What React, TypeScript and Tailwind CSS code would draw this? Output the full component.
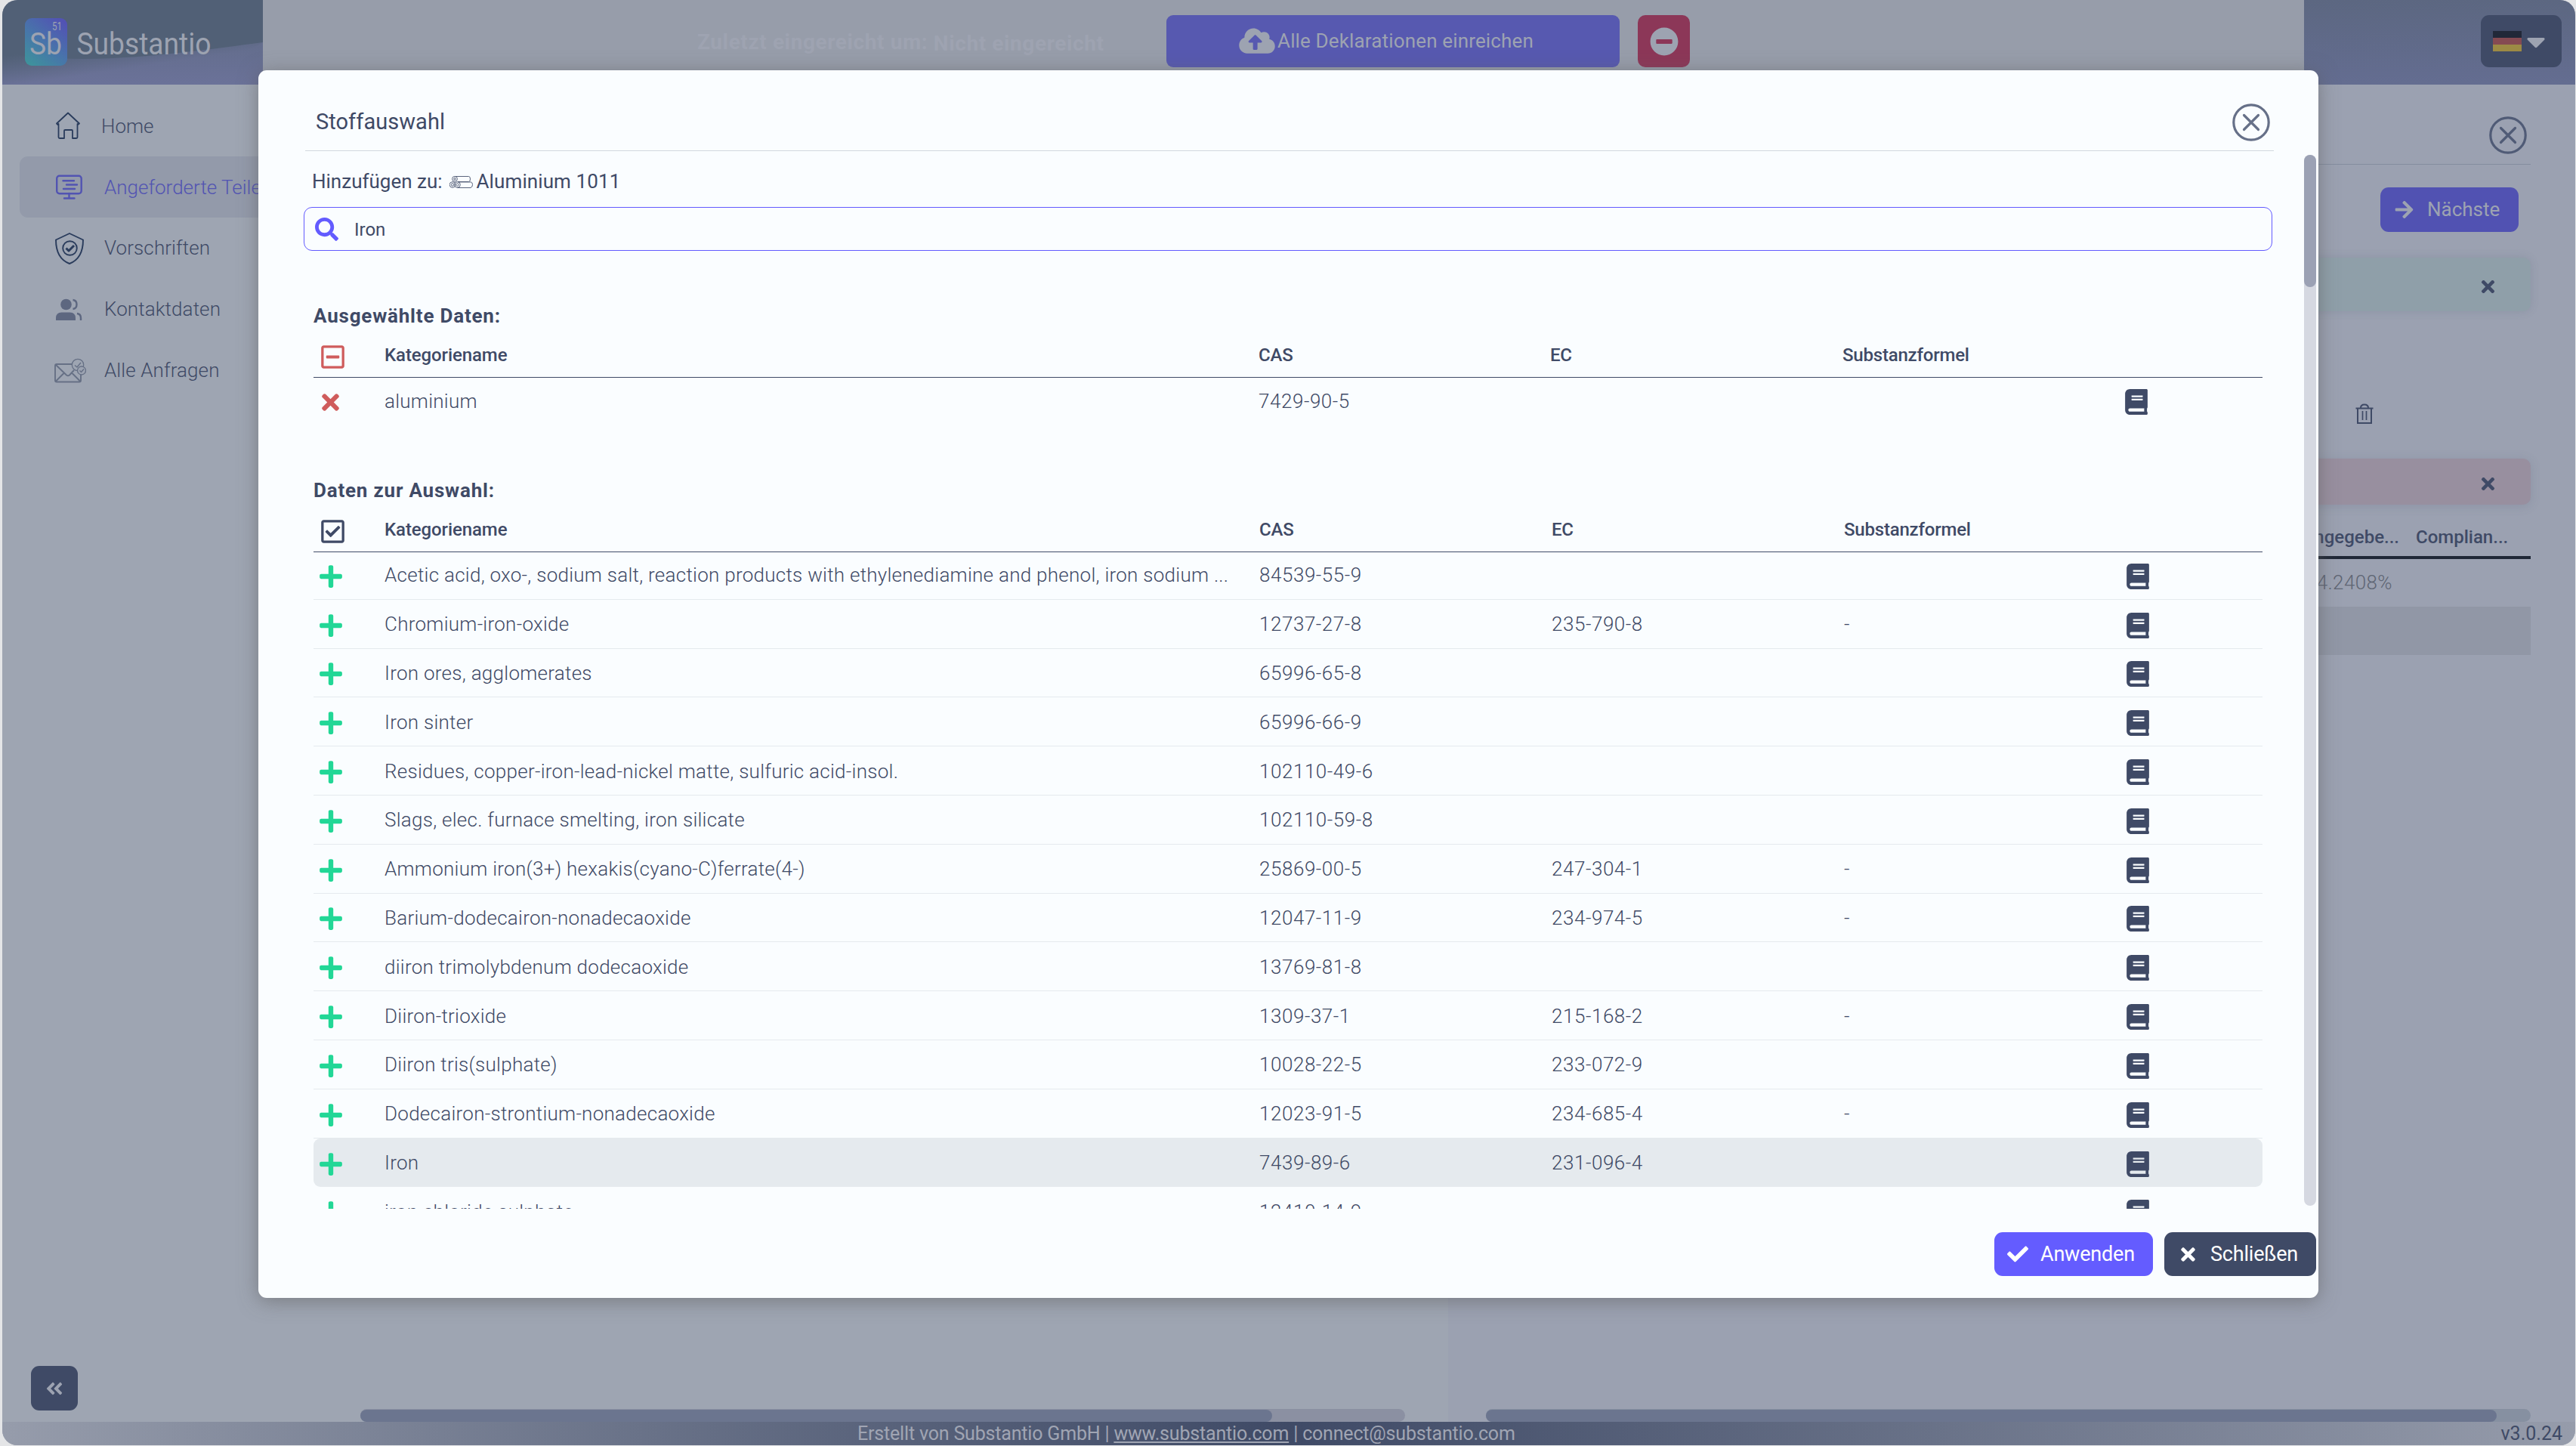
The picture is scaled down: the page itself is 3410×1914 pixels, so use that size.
import { FaAngleDoubleLeft, FaArrowRight, FaBook, FaCaretDown, FaCheck, FaCloudUploadAlt, FaMinusCircle, FaPlus, FaRegCheckSquare, FaRegMinusSquare, FaSearch, FaTimes } from "react-icons/fa";

type Substance = { name: string; cas: string; ec?: string; formula?: string; active?: boolean };

const substances: Substance[] = [
  { name: "Acetic acid, oxo-, sodium salt, reaction products with ethylenediamine and phenol, iron sodium ...", cas: "84539-55-9" },
  { name: "Chromium-iron-oxide", cas: "12737-27-8", ec: "235-790-8", formula: "-" },
  { name: "Iron ores, agglomerates", cas: "65996-65-8" },
  { name: "Iron sinter", cas: "65996-66-9" },
  { name: "Residues, copper-iron-lead-nickel matte, sulfuric acid-insol.", cas: "102110-49-6" },
  { name: "Slags, elec. furnace smelting, iron silicate", cas: "102110-59-8" },
  { name: "Ammonium iron(3+) hexakis(cyano-C)ferrate(4-)", cas: "25869-00-5", ec: "247-304-1", formula: "-" },
  { name: "Barium-dodecairon-nonadecaoxide", cas: "12047-11-9", ec: "234-974-5", formula: "-" },
  { name: "diiron trimolybdenum dodecaoxide", cas: "13769-81-8" },
  { name: "Diiron-trioxide", cas: "1309-37-1", ec: "215-168-2", formula: "-" },
  { name: "Diiron tris(sulphate)", cas: "10028-22-5", ec: "233-072-9" },
  { name: "Dodecairon-strontium-nonadecaoxide", cas: "12023-91-5", ec: "234-685-4", formula: "-" },
  { name: "Iron", cas: "7439-89-6", ec: "231-096-4", active: true },
  { name: "iron chloride sulphate", cas: "12410-14-9" },
];

function Logo() {
  return (
    <svg className="block h-[112px] w-[345px]" viewBox="3 0 345 112" fill="none">
      <defs>
        <linearGradient id="wave" x1="0" y1="55" x2="0" y2="112" gradientUnits="userSpaceOnUse">
          <stop stopColor="#636d8c" />
          <stop offset="1" stopColor="#6b7299" />
        </linearGradient>
        <linearGradient id="waveFade" x1="60" y1="66" x2="66" y2="106" gradientUnits="userSpaceOnUse">
          <stop stopColor="#516076" />
          <stop offset="1" stopColor="#516076" stopOpacity="0" />
        </linearGradient>
        <linearGradient id="tile" x1="36" y1="87" x2="84" y2="28" gradientUnits="userSpaceOnUse">
          <stop stopColor="#3d949b" />
          <stop offset="0.5" stopColor="#4874aa" />
          <stop offset="1" stopColor="#5252b4" />
        </linearGradient>
      </defs>
      <rect x="3" width="345" height="112" fill="#516076" />
      <path d="M3 70C110 86 200 76 348 56V112H3Z" fill="url(#wave)" />
      <path d="M3 60C110 78 200 76 348 56C300 85 180 112 3 112Z" fill="url(#waveFade)" />
      <rect x="33" y="24" width="56" height="63" rx="9" fill="url(#tile)" />
      <g fill="#9da3b1" fontFamily="Roboto, sans-serif">
        <text x="69" y="40" fontSize="14" textLength="13" lengthAdjust="spacingAndGlyphs">51</text>
        <text x="39" y="72" fontSize="41" textLength="43" lengthAdjust="spacingAndGlyphs">Sb</text>
        <text x="101.500" y="72" fontSize="41" textLength="178" lengthAdjust="spacingAndGlyphs">Substantio</text>
      </g>
    </svg>
  );
}

function HomeIcon() {
  return (
    <svg className="w-[36px] h-[44px]" viewBox="72 143 36 44" fill="none" stroke="#2a3c5c" strokeWidth="1.800" strokeLinejoin="round">
      <path d="M75 161.500 90 147.500 105 161.500 103 163 102.500 162V179.500Q102.500 181 101 181H96V171Q96 170 95 170H86Q85 170 85 171V181H79Q77.500 181 77.500 179.500V162L76.500 163Z" />
    </svg>
  );
}

function BoardIcon() {
  return (
    <svg className="w-[36px] h-[34px]" viewBox="0 0 36 34" fill="none" stroke="#5254b2" strokeWidth="2.400" strokeLinecap="round">
      <rect x="1.200" y="1.700" width="32.500" height="23.500" rx="3.500" />
      <path d="M9.500 8.200H24M14 13.500H28M10 19H25M17.500 25V31M11 31.500H24.500" />
    </svg>
  );
}

function ShieldIcon() {
  return (
    <svg className="w-[40px] h-[44px]" viewBox="0 0 40 44" fill="none" stroke="#2a3c5c" strokeWidth="1.900" strokeLinejoin="round">
      <path d="M20 2 38 10.500C38 26 33 37 20 42C7 37 2 26 2 10.500Z" />
      <circle cx="20.500" cy="21.500" r="9.300" />
      <path d="M15.500 21.500 19 25 26 18" strokeWidth="3" />
    </svg>
  );
}

function UsersIcon() {
  return (
    <svg className="w-[36px] h-[32px]" viewBox="0 0 36 32" fill="none">
      <circle cx="13.500" cy="9" r="7.300" fill="#5d6780" />
      <path d="M0 30V27Q0 19.500 7.500 19.500H18.500Q26 19.500 26 27V30Z" fill="#5d6780" />
      <path d="M22.500 3Q27.500 3.500 27.500 9T22.500 15M28 21Q33 21.500 33 27V30" stroke="#5d6780" strokeWidth="2.400" />
    </svg>
  );
}

function MailIcon() {
  return (
    <svg className="w-[42px] h-[34px]" viewBox="0 0 42 34" fill="none" stroke="#667085" strokeWidth="1.900" strokeLinejoin="round">
      <path d="M24 8H3Q1 8 1 10V29.500Q1 31.500 3 31.500H33Q35 31.500 35 29.500V22M2 9 16 22.500Q18 24 20 22.500L26 16M2 30.500 13 19.500M34 30.500 23 19.500" />
      <circle cx="31" cy="9" r="7.700" strokeWidth="1.300" />
      <circle cx="36" cy="16.500" r="5.500" fill="#9ca3b1" strokeWidth="1.300" />
      <path d="M27 9.500 30 12 35 6M33.500 16.500 35.500 18.500 39 14.500" strokeWidth="1.400" />
    </svg>
  );
}

function RodsIcon() {
  return (
    <svg className="w-[32px] h-[18px]" viewBox="0 0 32 18" fill="none" stroke="#5a647c" strokeWidth="1">
      <path d="M7 1.500H25.500Q27.500 1.500 27.500 5T25.500 8.500H11M11 9H28.500Q30.500 9.500 30.500 12.500T28 16.500H10" />
      <circle cx="7" cy="4.800" r="3.400" />
      <circle cx="7" cy="4.800" r="1.300" />
      <circle cx="4" cy="12.500" r="3.800" />
      <circle cx="4" cy="12.500" r="1.700" />
      <circle cx="10.500" cy="12.500" r="3.800" />
      <circle cx="10.500" cy="12.500" r="1.700" />
    </svg>
  );
}

function TrashIcon() {
  return (
    <svg className="w-[24px] h-[28px]" viewBox="0 0 24 28" fill="none" stroke="#3f4a66" strokeWidth="2">
      <path d="M0.500 6.500H23.500M3 6.500V26H21V6.500M7 6Q7 1.500 12 1.500T17 6" />
      <path d="M9.500 10V22M14.500 10V22" strokeWidth="1.700" />
    </svg>
  );
}

function CloseCircle({ color }: { color: string }) {
  return (
    <svg className="size-[50px]" viewBox="0 0 50 50" fill="none" stroke={color} strokeWidth="3.200" strokeLinecap="round">
      <circle cx="25" cy="25" r="23.200" />
      <path d="M15.500 15.500 34.500 34.500M34.500 15.500 15.500 34.500" />
    </svg>
  );
}

const nav = [
  { label: "Home", icon: <HomeIcon />, box: "pl-[69px] pt-px", text: "pl-[26px] text-[#3f4a66]" },
  { label: "Angeforderte Teile", icon: <BoardIcon />, box: "ml-[23px] pl-[48px] pt-px rounded-l-[11px] bg-[#939aaa]", text: "pl-[28px] text-[#5254b2]" },
  { label: "Vorschriften", icon: <ShieldIcon />, box: "pl-[69px]", text: "pl-[26px] tracking-[0.1px] text-[#3f4a66]" },
  { label: "Kontaktdaten", icon: <UsersIcon />, box: "pl-[71px]", text: "pl-[28px] tracking-[0.1px] text-[#3f4a66]" },
  { label: "Alle Anfragen", icon: <MailIcon />, box: "pl-[69px]", text: "pl-[24px] tracking-[0.1px] text-[#3f4a66]" },
];

function Sidebar() {
  return (
    <div className="w-[345px] shrink-0 flex flex-col pt-[14px]">
      {nav.map((item) => (
        <div key={item.label} className={`h-[81px] flex items-center overflow-hidden whitespace-nowrap ${item.box}`}>
          <span className="shrink-0">{item.icon}</span>
          <span className={`font-light text-[26px] ${item.text}`}>{item.label}</span>
        </div>
      ))}
      <button className="mt-auto mb-[15px] ml-[38px] w-[62px] h-[59px] rounded-[11px] bg-[#3f4a66] text-[#9da3b1] flex items-center justify-center">
        <FaAngleDoubleLeft className="size-[26px]" />
      </button>
    </div>
  );
}

function TopBar() {
  return (
    <div className="h-[112px] shrink-0 flex">
      <Logo />
      <div className="flex-1 bg-[#979daa] flex pt-[20px] pl-[575px]">
        <p className="w-[621px] pt-[18px] font-bold text-[28px] leading-[36px] tracking-[0.6px] text-[#9ea3b1] whitespace-nowrap">
          Zuletzt eingereicht um: <span className="relative top-[2px]">Nicht eingereicht</span>
        </p>
        <button className="w-[600px] h-[69px] rounded-[9px] bg-[#5759b0] text-[#9da3b1] text-[26px] tracking-[0.15px] flex items-center justify-center gap-[3px] pb-[1px] pr-[18px]">
          <FaCloudUploadAlt className="w-[48px] h-[38px]" />
          Alle Deklarationen einreichen
        </button>
        <button className="ml-[24px] w-[69px] h-[69px] rounded-[10px] bg-[#8c3758] text-[#9da3b1] flex items-center justify-center">
          <FaMinusCircle className="size-[38px]" />
        </button>
      </div>
      <div className="w-[359px] bg-gradient-to-t from-[#646d91] to-[#5c6781] flex justify-end pt-[20px] pr-[18px]">
        <div className="w-[107px] h-[69px] rounded-[11px] bg-[#3f4a66] flex items-center pl-[16px] gap-px">
          <div className="w-[38px] h-[27px] flex flex-col">
            <div className="flex-1 bg-[#212838]" />
            <div className="flex-1 bg-[#854a52]" />
            <div className="flex-1 bg-[#9c8a45]" />
          </div>
          <FaCaretDown className="w-[36px] h-[40px] text-[#9da3b1]" />
        </div>
      </div>
    </div>
  );
}

function RightPanel() {
  return (
    <div className="w-[1492px] shrink-0 flex flex-col pl-[50px] pr-[59px] bg-[#9ba1b1] text-[#3f4a66]">
      <div className="h-[106px] border-b border-[#848d9f] pt-[29px] pr-[5px] flex items-center justify-end">
        <CloseCircle color="#505b76" />
      </div>
      <button className="mt-[30px] mr-[16px] self-end w-[183px] h-[59px] rounded-[11px] bg-[#5152b2] text-[#9da3b1] text-[26px] flex items-center pl-[18px] gap-[17px]">
        <FaArrowRight className="size-[27px]" />
        Nächste
      </button>
      <div className="mt-[34px] h-[71px] rounded-[10px] bg-[#8f9fa9] shadow-[0_0_12px_rgba(80,90,110,0.18)] flex items-center justify-end pr-[44px] pt-[5px]">
        <FaTimes className="size-[25px]" />
      </div>
      <div className="mt-[122px] pr-[208px] h-[28px] flex justify-end">
        <TrashIcon />
      </div>
      <div className="mt-[45px] h-[61px] rounded-[10px] bg-[#988f9f] shadow-[0_2px_14px_rgba(80,90,110,0.18)] flex items-center justify-end pr-[44px] pt-[5px]">
        <FaTimes className="size-[25px]" />
      </div>
      <div className="h-[72px] border-b-4 border-[#1f2736] pt-[18px] flex items-center justify-end text-[24px] font-medium">
        <span>Angegebe...</span>
        <span className="w-[174px] pl-[22px]">Complian...</span>
      </div>
      <div className="h-[63px] pr-[183px] flex items-center justify-end text-[26px] font-light tracking-[0.4px] text-[#5f6674]">54.2408%</div>
      <div className="h-[64px] bg-[#9197a6]" />
      <div className="mt-auto h-[17px] rounded-full bg-[#8690a1] pt-px">
        <div className="w-[1338px] h-[16px] rounded-full bg-[#6b758f]" />
      </div>
    </div>
  );
}

function SubstanceRow({ item, cols, icon }: { item: Substance; cols: string; icon: React.ReactNode }) {
  return (
    <div className={`grid items-center font-light text-[26px] tracking-[0.55px] whitespace-nowrap ${cols}`}>
      {icon}
      <span className="pl-px tracking-[0.27px]">{item.name}</span>
      <span>{item.cas}</span>
      <span>{item.ec}</span>
      <span>{item.formula}</span>
      <FaBook className="w-[30px] h-[34px] ml-px mt-[2px]" />
    </div>
  );
}

function TableHeader({ cols, icon }: { cols: string; icon: React.ReactNode }) {
  return (
    <div className={`h-[66px] pt-[6px] border-b border-[#3f4a66] grid items-center font-medium text-[24px] tracking-[-0.2px] ${cols}`}>
      {icon}
      <span className="pl-px tracking-[-0.1px]">Kategoriename</span>
      <span>CAS</span>
      <span>EC</span>
      <span>Substanzformel</span>
    </div>
  );
}

const selectedCols = "grid-cols-[93px_1158px_386px_387px_1fr]";
const choiceCols = "grid-cols-[93px_1159px_387px_387px_1fr]";

function SubstanceDialog() {
  return (
    <div className="absolute left-[342px] top-[93px] w-[2727px] h-[1625px] rounded-[11px] bg-[#fafdff] text-[#3f4a66] shadow-[0_4px_26px_rgba(90,90,90,0.55)] flex flex-col">
      <div className="ml-[62px] mr-[59px] h-[107px] shrink-0 border-b border-[#d2d8de] pt-[31px] pl-[14px] pr-[5px] flex items-center justify-between">
        <h2 className="pt-px text-[29px] tracking-[0.05px]">Stoffauswahl</h2>
        <CloseCircle color="#667088" />
      </div>
      <div className="h-[1400px] flex overflow-hidden">
        <div className="flex-1 pl-[60px] pr-[42px] pt-[24px]">
          <div className="pl-[11px] h-[32px] flex items-center text-[26px]">
            Hinzufügen zu:
            <span className="ml-[9px] mr-[4px] mt-[2px]"><RodsIcon /></span>
            <span className="tracking-[0.1px]">Aluminium 1011</span>
          </div>
          <div className="mt-[18px] h-[58px] rounded-[11px] border border-[#635bff] flex items-center pl-[14px] pt-px text-[24px]">
            <FaSearch className="size-[31px] text-[#635bff]" />
            <span className="pl-[21px]">Iron</span>
          </div>
          <div className="ml-[13px] mr-[13px]">
            <h3 className="mt-[70px] h-[32px] flex items-center font-bold text-[26px] tracking-[0.8px]">Ausgewählte Daten:</h3>
            <TableHeader cols={selectedCols} icon={<FaRegMinusSquare className="w-[31px] h-[35px] ml-[10px] mt-[6px] text-[#cf5c5c]" />} />
            <div className="h-[62px] grid">
              <SubstanceRow item={{ name: "aluminium", cas: "7429-90-5" }} cols="grid-cols-[93px_1158px_386px_387px_373px_1fr]" icon={<FaTimes className="size-[33px] ml-[6px] mt-[2px] text-[#cf5c5c]" />} />
            </div>
            <h3 className="mt-[71px] h-[32px] flex items-center font-bold text-[26px] tracking-[0.8px]">Daten zur Auswahl:</h3>
            <TableHeader cols={choiceCols} icon={<FaRegCheckSquare className="w-[31px] h-[35px] ml-[10px] mt-[5px]" />} />
            <div className="-mt-[2px]">
              {substances.map((item) => (
                <div key={item.name} className={item.active ? "h-[64.8px] pt-[2px] grid rounded-[9px] bg-[#e5eaee]" : "h-[64.8px] pt-[2px] grid border-b border-[#e5eaee]"}>
                  <SubstanceRow item={item} cols="grid-cols-[93px_1159px_387px_387px_373px_1fr]" icon={<FaPlus className="w-[30px] h-[34px] ml-[8px] mt-[2px] text-[#22d796]" />} />
                </div>
              ))}
            </div>
          </div>
        </div>
        <div className="mt-[5px] mb-[4px] mr-[3px] w-[16px] rounded-full bg-[#d5d8e1]">
          <div className="h-[175px] rounded-full bg-[#9ba1b4]" />
        </div>
      </div>
      <div className="pt-[31px] pr-[3px] flex justify-end gap-[15px] text-white text-[27px] tracking-[-0.2px]">
        <button className="w-[210px] h-[58px] rounded-[11px] bg-[#645cff] flex items-center pl-[17px] gap-[16px]">
          <FaCheck className="size-[28px]" />
          Anwenden
        </button>
        <button className="w-[201px] h-[58px] rounded-[11px] bg-[#3f4a66] flex items-center pl-[18px] gap-[16px]">
          <FaTimes className="size-[27px]" />
          Schließen
        </button>
      </div>
    </div>
  );
}

export default function App() {
  return (
    <div className="relative w-[3410px] h-[1914px] overflow-hidden bg-[#e4e5e7] pl-[3px] pr-px pb-px font-['Roboto',sans-serif]">
      <div className="h-full rounded-[20px] overflow-hidden flex flex-col bg-[#9ea5b2]">
        <TopBar />
        <div className="flex-1 flex">
          <Sidebar />
          <div className="flex-1 flex items-end pl-[129px]">
            <div className="w-[1383px] h-[17px] rounded-full bg-[#8b90a2] pt-px">
              <div className="w-[1207px] h-[16px] rounded-full bg-[#6b758f]" />
            </div>
          </div>
          <RightPanel />
        </div>
        <div className="h-[31px] shrink-0 bg-gradient-to-r from-[#969cab] via-[#3f4a66] to-[#969cab] flex items-center justify-between pl-[1132px] pr-[17px] text-[25px] leading-[31px] text-[#a0a5b3]">
          <p className="tracking-[-0.18px]">
            Erstellt von Substantio GmbH | <a className="underline">www.substantio.com</a> | connect@substantio.com
          </p>
          <span className="text-[#3f4a66]">v3.0.24</span>
        </div>
      </div>
      <SubstanceDialog />
    </div>
  );
}
